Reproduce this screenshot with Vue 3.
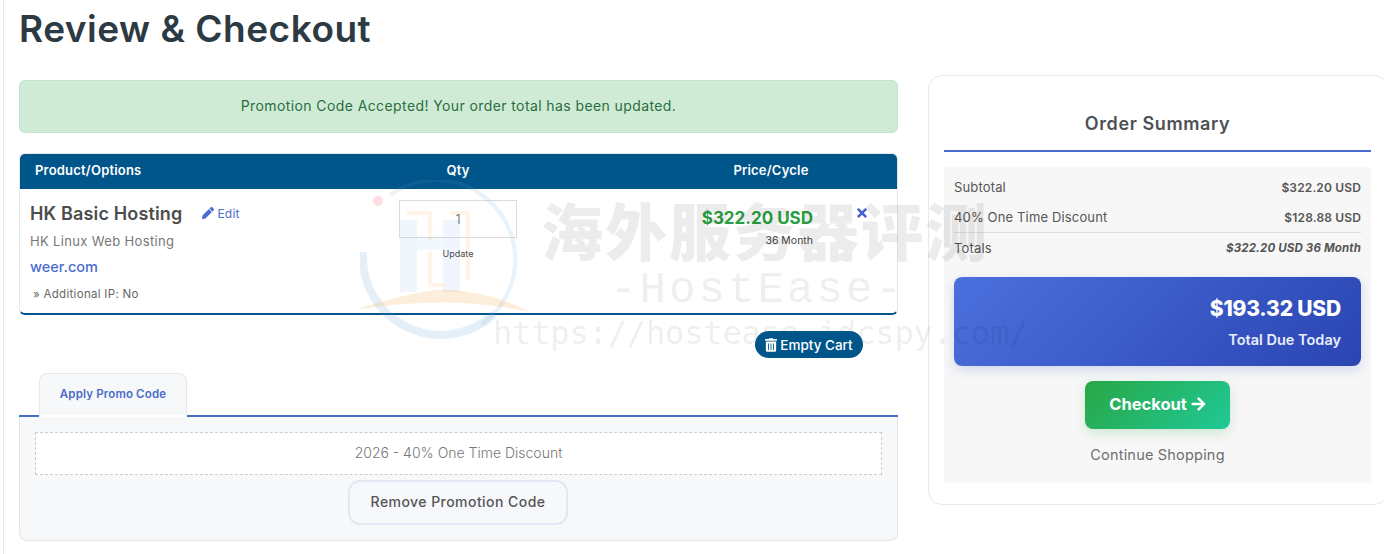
<script setup>
const rows = [
  { label: 'Subtotal', value: '$322.20 USD' },
  { label: '40% One Time Discount', value: '$128.88 USD' },
]
</script>

<template>
  <div class="page">
    <main class="main">
      <h1 class="title">Review &amp; Checkout</h1>
      <div class="alert">Promotion Code Accepted! Your order total has been updated.</div>

      <section class="cart">
        <div class="cart-head">
          <span class="c1 head-left">Product/Options</span>
          <span class="c2">Qty</span>
          <span class="c3">Price/Cycle</span>
        </div>
        <div class="cart-body">
          <div class="c1 product">
            <div class="name-line">
              <span class="name">HK Basic Hosting</span>
              <a class="edit">
                <svg class="pencil" viewBox="0 0 512 512"><path d="M497.9 142.1l-46.1 46.1c-4.7 4.7-12.3 4.7-17 0l-111-111c-4.7-4.7-4.7-12.3 0-17l46.1-46.1c18.7-18.7 49.1-18.7 67.9 0l60.1 60.1c18.8 18.7 18.8 49.1 0 67.9zM284.2 99.8L21.6 362.4.4 483.9c-2.9 16.4 11.4 30.6 27.8 27.8l121.5-21.3 262.6-262.6c4.7-4.7 4.7-12.3 0-17l-111-111c-4.8-4.7-12.4-4.7-17.1 0z"/></svg>
                Edit
              </a>
            </div>
            <div class="group">HK Linux Web Hosting</div>
            <div class="domain">weer.com</div>
            <div class="addon">» Additional IP: No</div>
          </div>
          <div class="c2 qty">
            <div class="qty-input">1</div>
            <div class="update">Update</div>
          </div>
          <div class="c3 price">
            <div class="amount">$322.20 USD</div>
            <div class="cycle">36 Month</div>
          </div>
          <svg class="remove" viewBox="0 0 352 512"><path d="M242.72 256l100.07-100.07c12.28-12.28 12.28-32.19 0-44.48l-22.24-22.24c-12.28-12.28-32.19-12.28-44.48 0L176 189.28 75.93 89.21c-12.28-12.28-32.19-12.28-44.48 0L9.21 111.45c-12.28 12.28-12.28 32.19 0 44.48L109.28 256 9.21 356.07c-12.28 12.28-12.28 32.19 0 44.48l22.24 22.24c12.28 12.28 32.2 12.28 44.48 0L176 322.72l100.07 100.07c12.28 12.28 32.2 12.28 44.48 0l22.24-22.24c12.28-12.28 12.28-32.19 0-44.48L242.72 256z"/></svg>
        </div>
      </section>

      <div class="empty-row">
        <button class="empty">
          <svg class="trash" viewBox="0 0 448 512"><path d="M32 464a48 48 0 0 0 48 48h288a48 48 0 0 0 48-48V128H32zm272-256a16 16 0 0 1 32 0v224a16 16 0 0 1-32 0zm-96 0a16 16 0 0 1 32 0v224a16 16 0 0 1-32 0zm-96 0a16 16 0 0 1 32 0v224a16 16 0 0 1-32 0zM432 32H312l-9.4-18.7A24 24 0 0 0 281.1 0H166.8a23.72 23.72 0 0 0-21.4 13.3L136 32H16A16 16 0 0 0 0 48v32a16 16 0 0 0 16 16h416a16 16 0 0 0 16-16V48a16 16 0 0 0-16-16z"/></svg>
          Empty Cart
        </button>
      </div>

      <div class="tabs">
        <div class="tab">Apply Promo Code</div>
      </div>
      <div class="tab-panel">
        <div class="promo">2026 - 40% One Time Discount</div>
        <button class="remove-promo">Remove Promotion Code</button>
      </div>
    </main>

    <aside class="side">
      <h2 class="side-title">Order Summary</h2>
      <div class="summary">
        <div v-for="r in rows" :key="r.label" class="row">
          <span>{{ r.label }}</span>
          <b>{{ r.value }}</b>
        </div>
        <div class="row totals">
          <span>Totals</span>
          <b><i>$322.20 USD 36 Month</i></b>
        </div>
        <div class="due">
          <div class="due-amount">$193.32 USD</div>
          <div class="due-label">Total Due Today</div>
        </div>
        <button class="checkout">
          Checkout
          <svg class="arrow" viewBox="0 0 448 512"><path d="M190.5 66.9l22.2-22.2c9.4-9.4 24.6-9.4 33.9 0L441 239c9.4 9.4 9.4 24.6 0 33.9L246.6 467.3c-9.4 9.4-24.6 9.4-33.9 0l-22.2-22.2c-9.5-9.5-9.3-25 .4-34.3L311.4 296H24c-13.3 0-24-10.7-24-24v-32c0-13.3 10.7-24 24-24h287.4L190.9 101.2c-9.8-9.3-10-24.8-.4-34.3z"/></svg>
        </button>
        <div class="continue">Continue Shopping</div>
      </div>
    </aside>

    <div class="watermark" aria-hidden="true">
      <svg class="wm-logo" viewBox="0 0 170 170">
        <circle cx="18" cy="21" r="5" fill="#f7a0b0" opacity=".35" />
        <path d="M30 15 A78 78 0 0 1 122 144" fill="none" stroke="#5b9bd5" stroke-width="4" opacity=".13" />
        <path d="M3 72 A78 78 0 0 0 134 134" fill="none" stroke="#5b9bd5" stroke-width="8" opacity=".16" />
        <rect x="40" y="40" width="17" height="72" fill="#5b9bd5" opacity=".09" />
        <rect x="83" y="40" width="17" height="72" fill="#5b9bd5" opacity=".09" />
        <rect x="57" y="57" width="26" height="13" fill="#5b9bd5" opacity=".07" />
        <path d="M47 33 H70 V60 M70 72 V105 H84 M90 33 H108 V100" fill="none" stroke="#f5b25a" stroke-width="4" opacity=".14" />
        <path d="M-6 130 Q70 106 92 110 Q130 112 170 132 Q90 114 -6 130 Z" fill="#f5a54a" opacity=".2" />
      </svg>
      <div class="wm-cn">海外服务器评测</div>
      <div class="wm-en">-HostEase-</div>
      <div class="wm-url">https://hostease.idcspy.com/</div>
    </div>
  </div>
</template>

<style>
html, body { margin: 0; background: #fff; }
</style>

<style scoped>
* { box-sizing: border-box; }
.page {
  position: relative;
  display: flex;
  gap: 30px;
  width: 1384px;
  height: 554px;
  overflow: hidden;
  margin: 0;
  padding-left: 19px;
  font-family: Inter, "Noto Sans", sans-serif;
  color: #555;
  background: #fff;
}
.page::before {
  content: "";
  position: absolute;
  left: 3px;
  top: 0;
  bottom: 0;
  width: 1px;
  background: #e8e8e8;
}
.main { width: 879px; flex: none; }
.title {
  margin: 0;
  height: 80px;
  padding-top: 7px;
  font-size: 37px;
  line-height: 44px;
  font-weight: 600;
  letter-spacing: .5px;
  color: #2c3a43;
}
.alert {
  height: 53px;
  line-height: 50px;
  text-align: center;
  font-size: 14px;
  letter-spacing: .4px;
  color: #2a6e40;
  background: #d0ebd5;
  border: 1px solid #c3e3ca;
  border-radius: 6px;
}
.cart {
  margin-top: 20px;
  height: 162px;
  border: 1px solid #e6e6e6;
  border-bottom: 2px solid #00558a;
  border-radius: 6px;
  overflow: hidden;
}
.cart-head {
  display: flex;
  align-items: center;
  height: 36px;
  margin: -1px -1px 0;
  padding-bottom: 2px;
  background: #00558a;
  color: #fff;
  font-size: 13px;
  letter-spacing: .2px;
  font-weight: 600;
  text-align: center;
}
.c1 { width: 319px; flex: none; }
.c2 { width: 238px; flex: none; }
.c3 { width: 190px; flex: none; margin-left: 99px; }
.head-left { text-align: left; padding-left: 16px; width: 320px; }
.cart-body { display: flex; position: relative; height: 124px; }
.product { padding: 12px 0 0 10px; }
.name-line { display: flex; align-items: center; height: 24px; }
.name { font-size: 18px; font-weight: 600; letter-spacing: .15px; color: #4c4c4c; }
.edit { margin-left: 20px; display: flex; align-items: center; gap: 3px; font-size: 12px; letter-spacing: .2px; color: #4a6cd0; }
.pencil { width: 12px; height: 12px; fill: #4a6cd0; }
.group { margin-top: 6px; font-size: 13px; line-height: 20px; letter-spacing: .35px; color: #777; }
.domain { margin-top: 6px; font-size: 14.5px; line-height: 20px; font-weight: 500; color: #4a6cd0; }
.addon { margin-top: 8px; padding-left: 3px; font-size: 11.5px; line-height: 18px; letter-spacing: .3px; color: #666; }
.qty { padding-top: 11px; text-align: center; }
.qty-input {
  width: 118px;
  height: 38px;
  line-height: 36px;
  margin: 0 auto;
  border: 1px solid #dcdcdc;
  font-size: 13px;
  font-weight: 300;
  color: #555;
}
.update { margin-top: 10px; font-size: 9px; line-height: 12px; color: #444; }
.price { padding-top: 17px; padding-right: 53px; text-align: right; }
.amount { font-size: 17px; line-height: 24px; font-weight: 700; color: #28a03f; white-space: nowrap; }
.cycle { margin-top: 4px; font-size: 10.5px; line-height: 14px; color: #444; }
.remove { position: absolute; left: 837px; top: 17px; width: 10px; height: 14px; fill: #4a5fd0; }
.empty-row { display: flex; justify-content: flex-end; padding: 16px 35px 0 0; height: 58px; position: relative; z-index: 2; }
.empty {
  display: flex;
  align-items: center;
  justify-content: center;
  gap: 3px;
  width: 108px;
  height: 27px;
  padding: 0;
  border: 0;
  border-radius: 14px;
  background: #00558a;
  color: #fff;
  font: 500 13.5px Inter, sans-serif;
}
.trash { width: 12px; height: 14px; fill: #fff; }
.tabs { height: 44px; padding-left: 20px; border-bottom: 2px solid #4a6cc8; }
.tab {
  width: 148px;
  height: 44px;
  border: 1px solid #e8e8e8;
  border-bottom: 2px solid #fff;
  border-radius: 8px 8px 0 0;
  background: #f7f8fa;
  text-align: center;
  line-height: 40px;
  font-size: 11.5px;
  letter-spacing: .15px;
  font-weight: 600;
  color: #4a6cc8;
}
.tab-panel {
  height: 124px;
  padding: 15px 15px 0;
  background: #f7f8fa;
  border: 1px solid #e6e6e6;
  border-top: 0;
  border-radius: 0 0 8px 8px;
  text-align: center;
}
.promo {
  height: 43px;
  line-height: 40px;
  background: #fff;
  border: 1px dashed #ccc;
  font-size: 14px;
  font-weight: 300;
  color: #777;
}
.remove-promo {
  display: block;
  width: 220px;
  height: 45px;
  margin: 5px 0 0 313px;
  padding: 0 0 2px;
  border: 2px solid #e3e7f1;
  border-radius: 12px;
  background: #f7f8fc;
  font: 500 14px Inter, sans-serif;
  letter-spacing: .45px;
  color: #555;
}
.side {
  flex: none;
  width: 460px;
  height: 430px;
  margin-top: 75px;
  padding: 0 15px;
  background: #fff;
  border: 1px solid #e8e8e8;
  border-radius: 14px;
}
.side-title {
  margin: 0;
  height: 76px;
  padding-top: 33px;
  line-height: 30px;
  border-bottom: 2px solid #4a6cd0;
  text-align: center;
  font-size: 18px;
  letter-spacing: .6px;
  font-weight: 600;
  color: #4d5156;
  width: 427px;
}
.summary {
  width: 427px;
  height: 316px;
  margin-top: 15px;
  padding: 5px 10px 0;
  background: #f7f7f7;
}
.row {
  display: flex;
  justify-content: space-between;
  align-items: center;
  height: 30px;
  font-size: 13px;
  letter-spacing: .15px;
  color: #555;
}
.row b { font-weight: 600; font-size: 12px; }
.totals { border-top: 1px solid #ddd; height: 31px; }
.totals b { font-size: 11.5px; font-weight: 700; }
.due {
  margin-top: 14px;
  height: 89px;
  padding: 18px 20px 0 0;
  text-align: right;
  color: #fff;
  border-radius: 8px;
  background: linear-gradient(135deg, #4b70dd, #2a45b2);
  box-shadow: 0 4px 12px rgba(60, 90, 200, .2);
}
.due-amount { font-size: 21px; line-height: 28px; font-weight: 800; letter-spacing: -.2px; }
.due-label { margin-top: 7px; font-size: 14.5px; line-height: 20px; font-weight: 600; color: #e8edfb; }
.checkout {
  display: flex;
  align-items: center;
  justify-content: center;
  gap: 4px;
  width: 145px;
  height: 48px;
  margin: 15px auto 0;
  padding: 0 0 2px;
  border: 0;
  border-radius: 8px;
  color: #fff;
  background: linear-gradient(135deg, #28a745, #20c997);
  box-shadow: 0 4px 12px rgba(40, 167, 69, .2);
  font: 700 16.5px Inter, sans-serif;
}
.arrow { width: 15px; height: 16px; fill: #fff; }
.continue { margin-top: 15px; text-align: center; font-size: 14.5px; line-height: 22px; letter-spacing: .2px; color: #6d6f73; }

.watermark { position: absolute; inset: 0; pointer-events: none; z-index: 1; }
.wm-logo { position: absolute; left: 360px; top: 180px; width: 170px; height: 170px; }
.wm-cn {
  position: absolute;
  left: 541px;
  top: 190px;
  font: 900 62px/78px "Noto Sans CJK SC", sans-serif;
  letter-spacing: 2px;
  color: rgba(0, 0, 0, .075);
  white-space: nowrap;
}
.wm-en {
  position: absolute;
  left: 610px;
  top: 265px;
  font: 400 44px/50px "Liberation Mono", monospace;
  letter-spacing: 3.1px;
  color: rgba(0, 0, 0, .085);
  white-space: nowrap;
}
.wm-url {
  position: absolute;
  left: 493px;
  top: 314px;
  font: 400 32px/38px "DejaVu Sans Mono", monospace;
  letter-spacing: -.15px;
  color: rgba(0, 0, 0, .085);
  white-space: nowrap;
}
</style>
